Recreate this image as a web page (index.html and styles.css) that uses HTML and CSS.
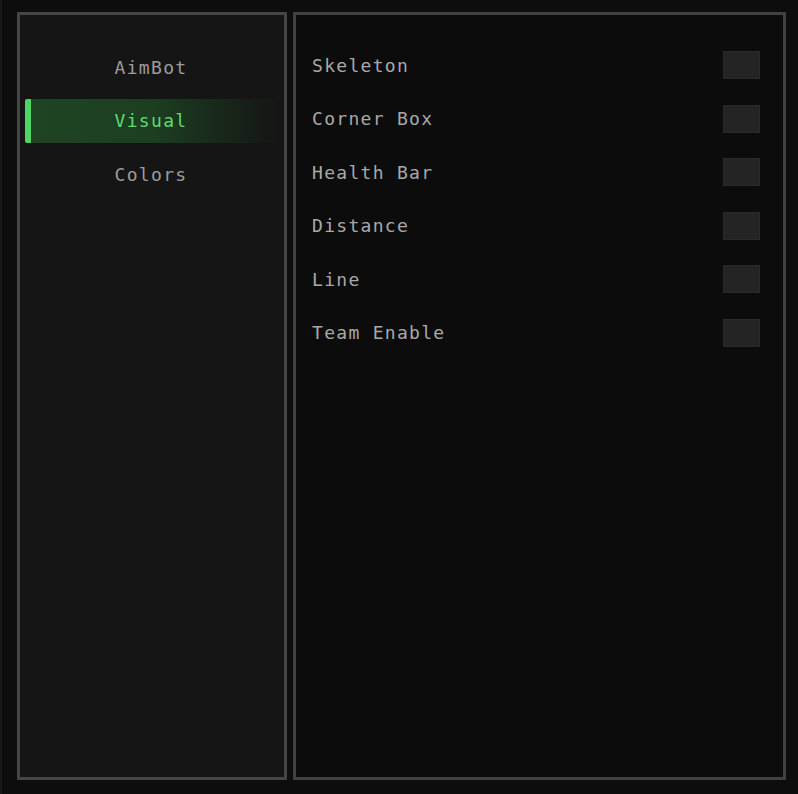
FILE: index.html
```html
<!DOCTYPE html>
<html>
<head>
<meta charset="utf-8">
<link rel="stylesheet" href="styles.css">
</head>
<body>
<div class="window">
  <div class="sidebar">
    <div class="menu">
      <div class="tab">AimBot</div>
      <div class="tab active">Visual</div>
      <div class="tab">Colors</div>
    </div>
  </div>
  <div class="content">
    <div class="row"><span class="label">Skeleton</span><span class="check"></span></div>
    <div class="row"><span class="label">Corner Box</span><span class="check"></span></div>
    <div class="row"><span class="label">Health Bar</span><span class="check"></span></div>
    <div class="row"><span class="label">Distance</span><span class="check"></span></div>
    <div class="row"><span class="label">Line</span><span class="check"></span></div>
    <div class="row"><span class="label">Team Enable</span><span class="check"></span></div>
  </div>
</div>
</body>
</html>
```
FILE: styles.css
```css
html, body {
  margin: 0;
  padding: 0;
  background: #0d0d0d;
}
body {
  font-family: "DejaVu Sans Mono", monospace;
  font-size: 18px;
  letter-spacing: 1.3px;
}
.window {
  box-sizing: border-box;
  width: 798px;
  height: 794px;
  display: flex;
  gap: 6px;
  padding: 12px 12px 14px 15px;
  border-left: 2px solid #181818;
}
.sidebar {
  box-sizing: border-box;
  width: 270px;
  height: 768px;
  background: #151515;
  border: 3px solid #454545;
  padding: 30px 7px 0 5px;
}
.menu {
  display: flex;
  flex-direction: column;
  gap: 9.5px;
}
.tab {
  height: 44px;
  display: flex;
  align-items: center;
  justify-content: center;
  color: #9c9c9c;
}
.tab.active {
  color: #62d873;
  border-left: 6px solid #4fd365;
  border-radius: 2px;
  background: linear-gradient(to right, #1e4423 0%, #1c3e21 50%, rgba(21, 21, 21, 0) 100%);
  padding-right: 6px;
}
.content {
  box-sizing: border-box;
  flex: 1;
  height: 768px;
  background: #0c0c0c;
  border: 3px solid #414141;
  padding: 36px 23px 0 16px;
  display: flex;
  flex-direction: column;
  gap: 25.5px;
}
.row {
  height: 28px;
  display: flex;
  align-items: center;
  justify-content: space-between;
}
.label {
  color: #a9a9a9;
}
.check {
  box-sizing: border-box;
  width: 37px;
  height: 28px;
  background: #242424;
  border: 1px solid #2a2a2a;
}
```
